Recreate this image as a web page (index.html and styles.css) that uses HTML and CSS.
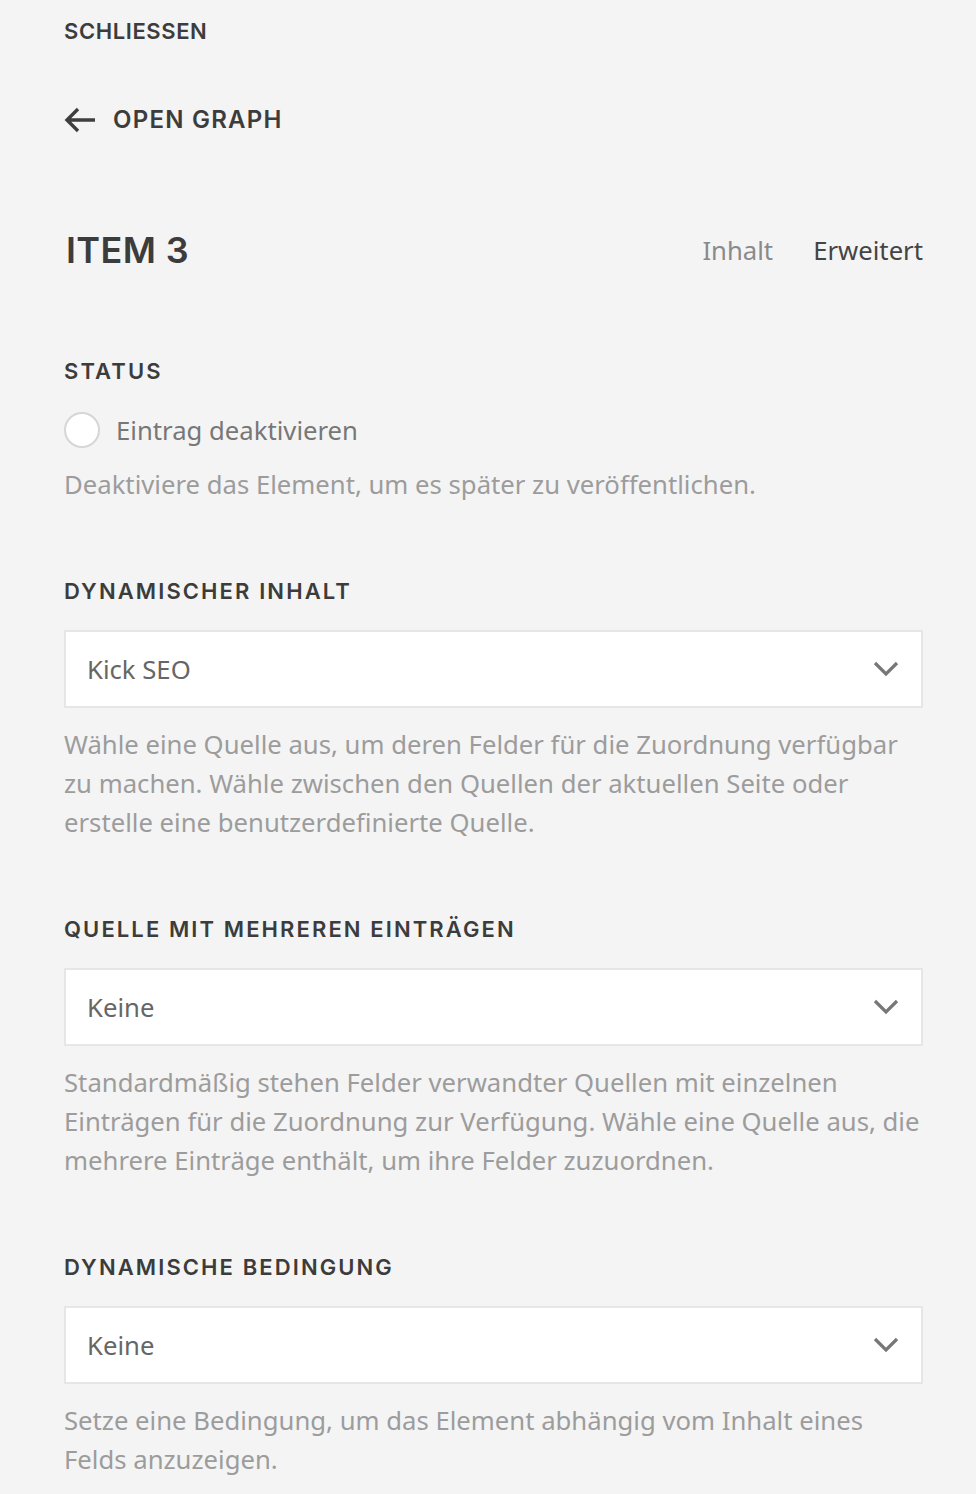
FILE: index.html
```html
<!DOCTYPE html>
<html lang="de">
<head>
<meta charset="utf-8">
<title>Item 3</title>
<link rel="stylesheet" href="styles.css">
</head>
<body>
<div class="panel">
  <div class="close">SCHLIESSEN</div>
  <div class="back">
    <svg class="back-icon" width="32" height="26" viewBox="0 0 32 26" aria-hidden="true">
      <path d="M31 13H3M14 2L3 13l11 11" fill="none" stroke="#3e3e3e" stroke-width="3.4"/>
    </svg>
    <span>OPEN GRAPH</span>
  </div>
  <div class="title-row">
    <h1 class="title">ITEM 3</h1>
    <nav class="tabs">
      <span class="tab">Inhalt</span>
      <span class="tab active">Erweitert</span>
    </nav>
  </div>

  <section class="field first">
    <h2 class="label">STATUS</h2>
    <label class="check">
      <span class="radio"></span>
      <span>Eintrag deaktivieren</span>
    </label>
    <p class="desc">Deaktiviere das Element, um es später zu veröffentlichen.</p>
  </section>

  <section class="field">
    <h2 class="label">DYNAMISCHER INHALT</h2>
    <div class="select"><span>Kick SEO</span><svg class="chev" width="26" height="16" viewBox="0 0 26 16"><path d="M2 2l11 11L24 2" fill="none" stroke="#777" stroke-width="3.2"/></svg></div>
    <p class="desc">Wähle eine Quelle aus, um deren Felder für die Zuordnung verfügbar zu machen. Wähle zwischen den Quellen der aktuellen Seite oder erstelle eine benutzerdefinierte Quelle.</p>
  </section>

  <section class="field">
    <h2 class="label">QUELLE MIT MEHREREN EINTRÄGEN</h2>
    <div class="select"><span>Keine</span><svg class="chev" width="26" height="16" viewBox="0 0 26 16"><path d="M2 2l11 11L24 2" fill="none" stroke="#777" stroke-width="3.2"/></svg></div>
    <p class="desc">Standardmäßig stehen Felder verwandter Quellen mit einzelnen Einträgen für die Zuordnung zur Verfügung. Wähle eine Quelle aus, die mehrere Einträge enthält, um ihre Felder zuzuordnen.</p>
  </section>

  <section class="field">
    <h2 class="label">DYNAMISCHE BEDINGUNG</h2>
    <div class="select"><span>Keine</span><svg class="chev" width="26" height="16" viewBox="0 0 26 16"><path d="M2 2l11 11L24 2" fill="none" stroke="#777" stroke-width="3.2"/></svg></div>
    <p class="desc">Setze eine Bedingung, um das Element abhängig vom Inhalt eines Felds anzuzeigen.</p>
  </section>
</div>
</body>
</html>
```
FILE: styles.css
```css
html, body {
  margin: 0;
  padding: 0;
  background: #f4f4f4;
}
.panel {
  padding: 16px 53px 40px 64px;
  font-family: "Noto Sans", "Open Sans", sans-serif;
  color: #444;
}
.close, .back, .title, .label {
  font-family: Inter, "DejaVu Sans", sans-serif;
  font-weight: 600;
  color: #3c3c3c;
}
.close {
  font-size: 22px;
  line-height: 30px;
  letter-spacing: 0.6px;
}
.back {
  margin-top: 59px;
  display: flex;
  align-items: center;
  gap: 17px;
  font-size: 24px;
  line-height: 30px;
  letter-spacing: 1.25px;
}
.back-icon { display: block; }
.title-row {
  margin-top: 90px;
  display: flex;
  align-items: center;
  justify-content: space-between;
  height: 50px;
}
.title {
  margin: 0;
  padding-left: 2px;
  font-size: 36px;
  line-height: 50px;
  letter-spacing: 0.4px;
}
.tabs {
  display: flex;
  gap: 40px;
  font-size: 25.7px;
}
.tab { color: #8a8a8a; }
.tab.active { color: #444; }
.field { margin-top: 72px; }
.field.first { margin-top: 81px; }
.label {
  margin: 0 0 24px;
  font-size: 22px;
  line-height: 30px;
  letter-spacing: 2.1px;
}
.field.first .label { margin-bottom: 26px; }
.check {
  display: flex;
  align-items: center;
  gap: 16px;
  height: 36px;
  font-size: 25.7px;
  color: #777;
}
.radio {
  width: 32px;
  height: 32px;
  border: 2px solid #d6d6d6;
  border-radius: 50%;
  background: #fff;
  flex: none;
}
.desc {
  margin: 17px 0 0;
  font-size: 25.7px;
  line-height: 39px;
  color: #9c9c9c;
}
.select {
  box-sizing: border-box;
  height: 78px;
  background: #fff;
  border: 2px solid #e6e6e6;
  display: flex;
  align-items: center;
  justify-content: space-between;
  padding: 0 22px 0 21px;
  font-size: 25.7px;
  color: #666;
}
.chev { display: block; }
```
